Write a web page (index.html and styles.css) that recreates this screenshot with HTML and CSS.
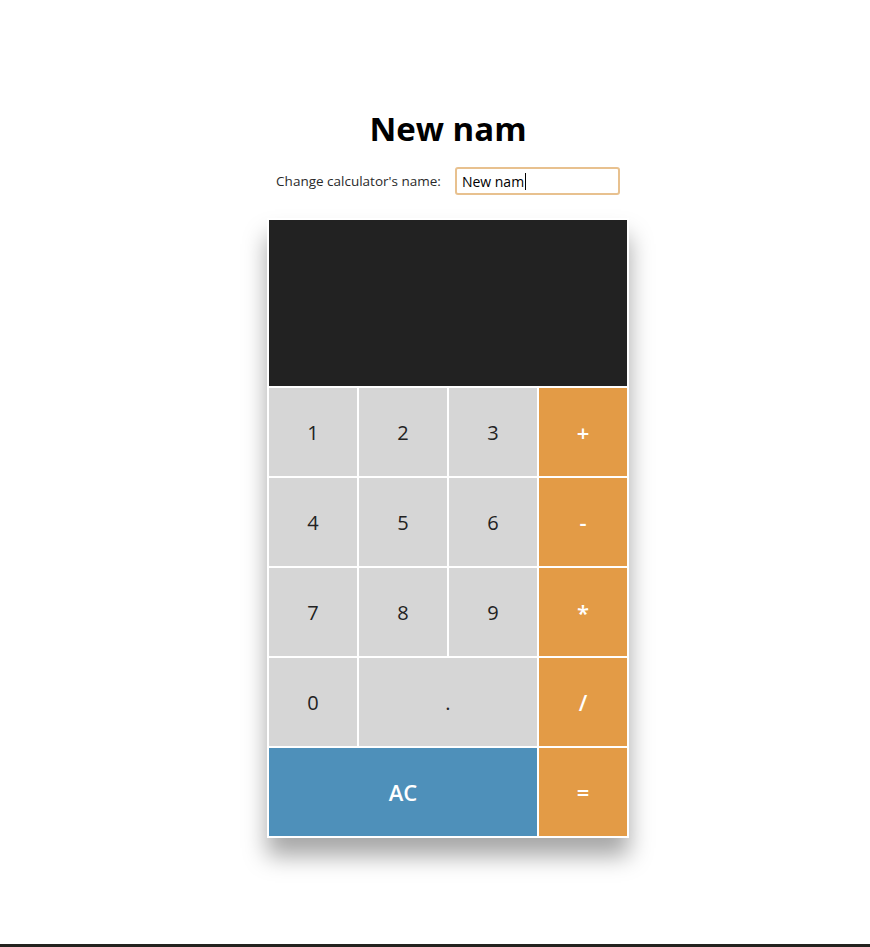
FILE: index.html
```html
<!DOCTYPE html>
<html lang="en">
<head>
<meta charset="utf-8">
<title>Calculator</title>
<link rel="stylesheet" href="styles.css">
</head>
<body>
<div class="page">
  <h1 class="title">New nam</h1>
  <div class="name-row">
    <label class="name-label" for="calc-name">Change calculator's name:</label>
    <div class="name-input"><span class="name-text">New nam</span><span class="caret"></span></div>
  </div>
  <div class="calc">
    <div class="display"></div>
    <div class="key">1</div>
    <div class="key">2</div>
    <div class="key">3</div>
    <div class="key op">+</div>
    <div class="key">4</div>
    <div class="key">5</div>
    <div class="key">6</div>
    <div class="key op">-</div>
    <div class="key">7</div>
    <div class="key">8</div>
    <div class="key">9</div>
    <div class="key op">*</div>
    <div class="key">0</div>
    <div class="key wide">.</div>
    <div class="key op">/</div>
    <div class="key clear">AC</div>
    <div class="key op">=</div>
  </div>
</div>
</body>
</html>
```
FILE: styles.css
```css
html, body {
  margin: 0;
  padding: 0;
  background: #ffffff;
}
body {
  font-family: "Open Sans", "Noto Sans", sans-serif;
  color: #222222;
}
.page {
  box-sizing: border-box;
  height: 947px;
  border-bottom: 3px solid #23221f;
  padding: 0 0 0 26px;
  display: flex;
  flex-direction: column;
  align-items: center;
  overflow: hidden;
}
.title {
  margin: 104px 0 0 0;
  font-size: 33px;
  line-height: 50px;
  font-weight: 700;
  color: #000000;
}
.name-row {
  margin-top: 13px;
  display: flex;
  align-items: center;
  gap: 14px;
}
.name-label {
  font-size: 13.5px;
  color: #2a2a2a;
}
.name-input {
  box-sizing: border-box;
  width: 165px;
  height: 28px;
  border: 2px solid #e8c18f;
  border-radius: 3px;
  display: flex;
  align-items: center;
  padding-left: 5px;
  font-size: 14px;
  color: #000000;
}
.caret {
  display: inline-block;
  width: 1px;
  height: 17px;
  background: #000000;
  margin-left: 1px;
}
.calc {
  margin-top: 23px;
  display: grid;
  grid-template-columns: repeat(4, 88px);
  grid-template-rows: 166px repeat(5, 88px);
  gap: 2px;
  padding: 2px;
  background: #ffffff;
  box-shadow: 0 18px 22px rgba(0, 0, 0, 0.35);
}
.display {
  grid-column: 1 / 5;
  background: #222222;
}
.key {
  background: #d6d6d6;
  display: flex;
  align-items: center;
  justify-content: center;
  font-size: 20px;
  color: #222222;
}
.key.wide {
  grid-column: span 2;
}
.key.op {
  background: #e39b46;
  color: #ffffff;
  font-size: 22px;
  font-weight: 600;
}
.key.clear {
  grid-column: span 3;
  background: #4e90ba;
  color: #ffffff;
  font-size: 22px;
  font-weight: 600;
}
```
